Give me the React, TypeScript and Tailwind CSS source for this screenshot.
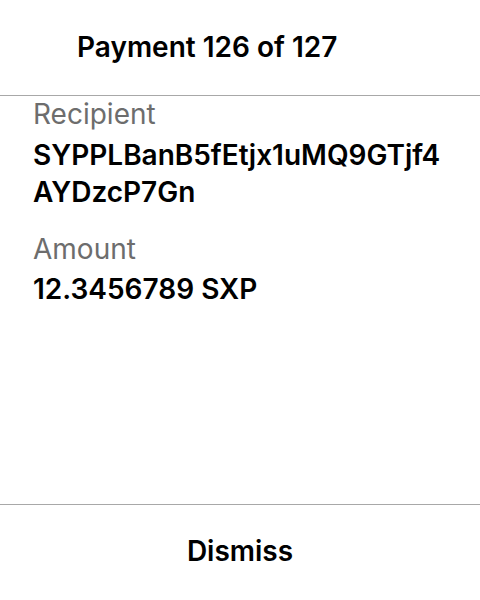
export default function App() {
  return (
    <div className="w-[480px] h-[600px] bg-white flex flex-col" style={{ fontFamily: "Inter, 'Noto Sans', sans-serif" }}>
      <div className="h-[95px] pl-[77px] pt-[30px]">
        <div className="text-[28px] leading-[34px] font-semibold text-black">Payment 126 of 127</div>
      </div>
      <div className="h-px bg-[#a8a8a8]" />
      <div className="flex-1 px-[33px] pt-[1px]">
        <div className="text-[28px] leading-[34px] text-[#6d6d6d]">Recipient</div>
        <div className="text-[28px] leading-[37px] font-semibold text-black mt-[6px] whitespace-nowrap">
          SYPPLBanB5fEtjx1uMQ9GTjf4
          <br />
          AYDzcP7Gn
        </div>
        <div className="text-[28px] leading-[34px] text-[#6d6d6d] mt-[21px]">Amount</div>
        <div className="text-[28px] leading-[34px] font-semibold text-black mt-[6px]">12.3456789 SXP</div>
      </div>
      <div className="h-px bg-[#a8a8a8]" />
      <div className="h-[95px] pt-[29px] flex justify-center">
        <div className="text-[28px] leading-[34px] font-semibold text-black">Dismiss</div>
      </div>
    </div>
  );
}
